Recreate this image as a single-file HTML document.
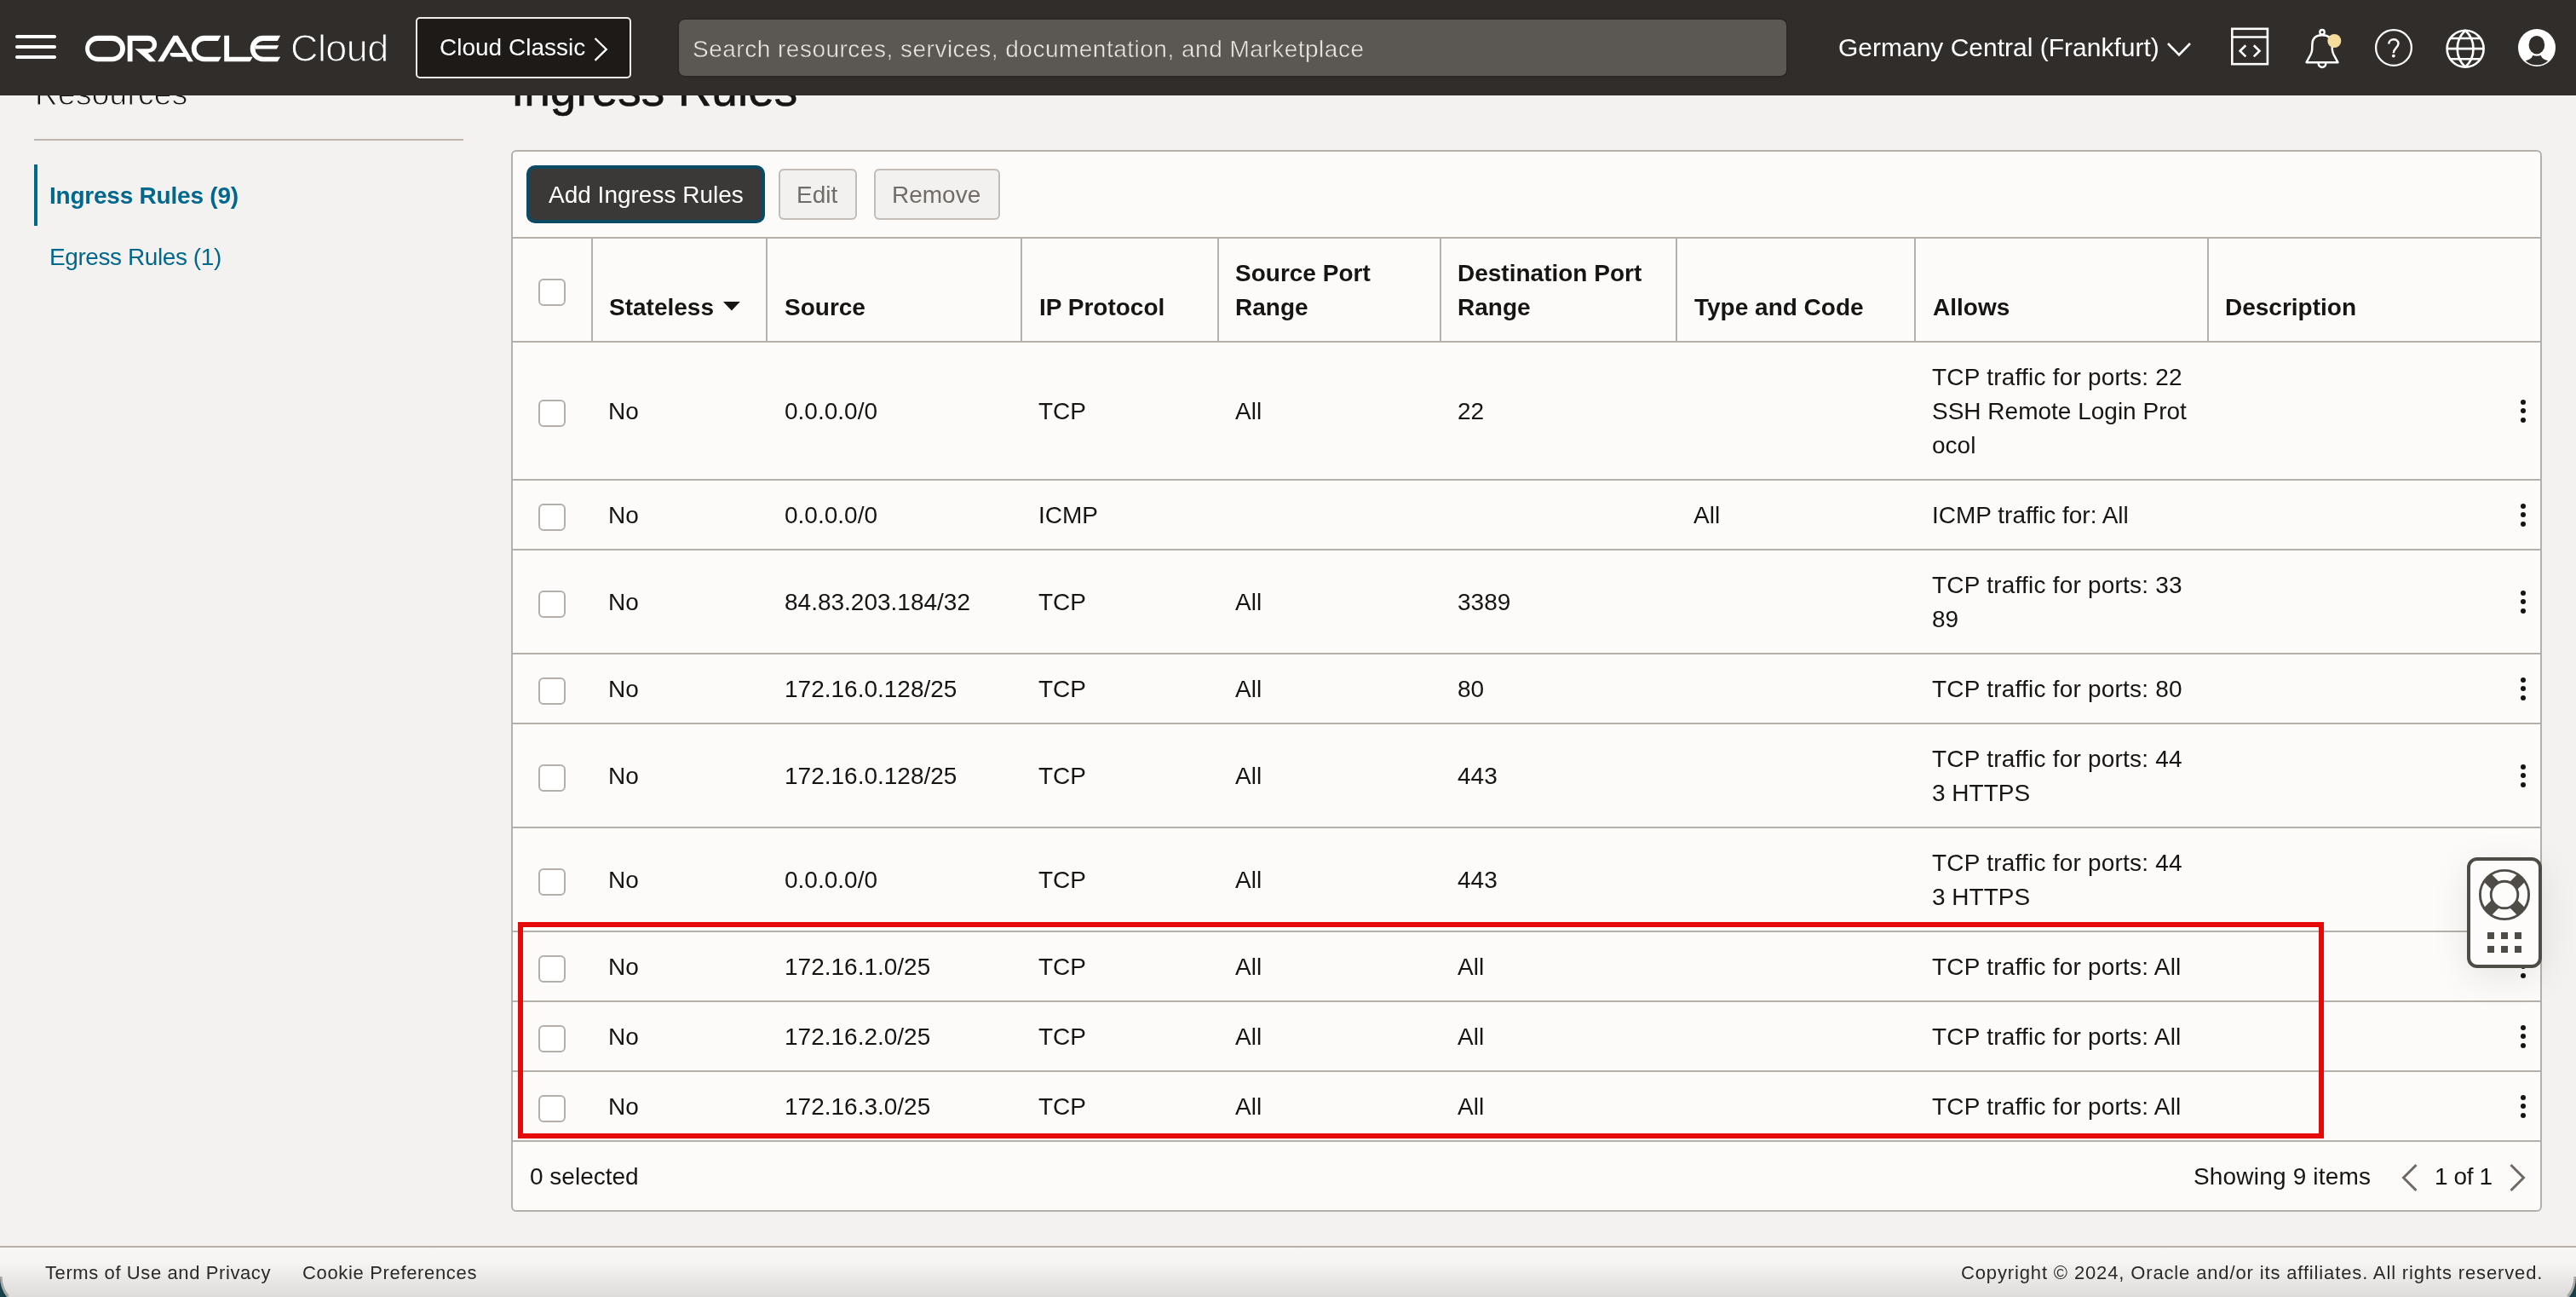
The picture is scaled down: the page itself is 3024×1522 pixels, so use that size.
<!DOCTYPE html>
<html><head><meta charset="utf-8"><title>Ingress Rules</title>
<style>
html,body{margin:0;padding:0;width:3024px;height:1522px;overflow:hidden;background:#f3f2f0;font-family:"Liberation Sans", sans-serif}
.t{position:absolute;white-space:nowrap;font-family:"Liberation Sans", sans-serif;will-change:transform}
.r{position:absolute;box-sizing:content-box}
</style></head><body>
<div class="r" style="left:0px;top:112px;width:3024px;height:1350px;background:#f3f2f0"></div>
<div class="t" style="left:41px;top:91.68px;font-size:37px;line-height:37px;color:#161513;font-weight:normal;letter-spacing:0.3px;-webkit-text-stroke:0.9px #f3f2f0;">Resources</div>
<div class="t" style="left:600px;top:78.44px;font-size:55px;line-height:55px;color:#161513;font-weight:normal;letter-spacing:0px;-webkit-text-stroke:0.6px #161513;">Ingress Rules</div>
<div class="r" style="left:40px;top:163px;width:504px;height:2px;background:#bdb6b0"></div>
<div class="r" style="left:40px;top:193px;width:4px;height:72px;background:#00688c"></div>
<div class="t" style="left:58px;top:216.30px;font-size:28px;line-height:28px;color:#00688c;font-weight:bold;letter-spacing:-0.22px;">Ingress Rules (9)</div>
<div class="t" style="left:58px;top:288.30px;font-size:28px;line-height:28px;color:#00688c;font-weight:normal;letter-spacing:-0.42px;">Egress Rules (1)</div>
<div class="r" style="left:600px;top:176px;width:2380px;height:1242px;border:2px solid #b6b0ab;border-radius:6px;background:#fcfbfa"></div>
<div class="r" style="left:618px;top:194px;width:272px;height:60px;border:4px solid #0b4a63;border-radius:10px;background:#3b3937"></div>
<div class="t" style="left:644px;top:215.30px;font-size:28px;line-height:28px;color:#ffffff;font-weight:normal;letter-spacing:0px;">Add Ingress Rules</div>
<div class="r" style="left:914px;top:198px;width:88px;height:56px;border:2px solid #c3bcb6;border-radius:6px;background:#f3f1ef"></div>
<div class="t" style="left:935px;top:215.30px;font-size:28px;line-height:28px;color:#716c67;font-weight:normal;letter-spacing:0px;">Edit</div>
<div class="r" style="left:1026px;top:198px;width:144px;height:56px;border:2px solid #c3bcb6;border-radius:6px;background:#f3f1ef"></div>
<div class="t" style="left:1047px;top:215.30px;font-size:28px;line-height:28px;color:#716c67;font-weight:normal;letter-spacing:0px;">Remove</div>
<div class="r" style="left:602px;top:278px;width:2380px;height:2px;background:#b6b0ab"></div>
<div class="r" style="left:602px;top:400px;width:2380px;height:2px;background:#b6b0ab"></div>
<div class="r" style="left:694px;top:280px;width:2px;height:120px;background:#b6b0ab"></div>
<div class="r" style="left:899px;top:280px;width:2px;height:120px;background:#b6b0ab"></div>
<div class="r" style="left:1198px;top:280px;width:2px;height:120px;background:#b6b0ab"></div>
<div class="r" style="left:1429px;top:280px;width:2px;height:120px;background:#b6b0ab"></div>
<div class="r" style="left:1690px;top:280px;width:2px;height:120px;background:#b6b0ab"></div>
<div class="r" style="left:1967px;top:280px;width:2px;height:120px;background:#b6b0ab"></div>
<div class="r" style="left:2247px;top:280px;width:2px;height:120px;background:#b6b0ab"></div>
<div class="r" style="left:2591px;top:280px;width:2px;height:120px;background:#b6b0ab"></div>
<div class="r" style="left:632px;top:327px;width:28px;height:28px;border:2px solid #b5afaa;border-radius:6px;background:#fff"></div>
<div class="t" style="left:715px;top:347.30px;font-size:28px;line-height:28px;color:#161513;font-weight:bold;letter-spacing:0px;">Stateless</div>
<svg class="r" style="left:849px;top:354px" width="21" height="11"><path d="M0,0 H19.8 L9.9,10.4 Z" fill="#161513"/></svg>
<div class="t" style="left:921px;top:347.30px;font-size:28px;line-height:28px;color:#161513;font-weight:bold;letter-spacing:0px;">Source</div>
<div class="t" style="left:1220px;top:347.30px;font-size:28px;line-height:28px;color:#161513;font-weight:bold;letter-spacing:0px;">IP Protocol</div>
<div class="t" style="left:1450px;top:307.30px;font-size:28px;line-height:28px;color:#161513;font-weight:bold;letter-spacing:0px;">Source Port</div>
<div class="t" style="left:1450px;top:347.30px;font-size:28px;line-height:28px;color:#161513;font-weight:bold;letter-spacing:0px;">Range</div>
<div class="t" style="left:1711px;top:307.30px;font-size:28px;line-height:28px;color:#161513;font-weight:bold;letter-spacing:0px;">Destination Port</div>
<div class="t" style="left:1711px;top:347.30px;font-size:28px;line-height:28px;color:#161513;font-weight:bold;letter-spacing:0px;">Range</div>
<div class="t" style="left:1989px;top:347.30px;font-size:28px;line-height:28px;color:#161513;font-weight:bold;letter-spacing:0px;">Type and Code</div>
<div class="t" style="left:2269px;top:347.30px;font-size:28px;line-height:28px;color:#161513;font-weight:bold;letter-spacing:0px;">Allows</div>
<div class="t" style="left:2612px;top:347.30px;font-size:28px;line-height:28px;color:#161513;font-weight:bold;letter-spacing:0px;">Description</div>
<div class="r" style="left:632px;top:469px;width:28px;height:28px;border:2px solid #b5afaa;border-radius:6px;background:#fff"></div>
<div class="t" style="left:714px;top:469.30px;font-size:28px;line-height:28px;color:#161513;font-weight:normal;letter-spacing:0px;">No</div>
<div class="t" style="left:921px;top:469.30px;font-size:28px;line-height:28px;color:#161513;font-weight:normal;letter-spacing:0px;">0.0.0.0/0</div>
<div class="t" style="left:1219px;top:469.30px;font-size:28px;line-height:28px;color:#161513;font-weight:normal;letter-spacing:0px;">TCP</div>
<div class="t" style="left:1450px;top:469.30px;font-size:28px;line-height:28px;color:#161513;font-weight:normal;letter-spacing:0px;">All</div>
<div class="t" style="left:1711px;top:469.30px;font-size:28px;line-height:28px;color:#161513;font-weight:normal;letter-spacing:0px;">22</div>
<div class="t" style="left:2268px;top:429.30px;font-size:28px;line-height:28px;color:#161513;font-weight:normal;letter-spacing:0.22px;">TCP traffic for ports: 22</div>
<div class="t" style="left:2268px;top:469.30px;font-size:28px;line-height:28px;color:#161513;font-weight:normal;letter-spacing:0px;">SSH Remote Login Prot</div>
<div class="t" style="left:2268px;top:509.30px;font-size:28px;line-height:28px;color:#161513;font-weight:normal;letter-spacing:0px;">ocol</div>
<div class="r" style="left:2959px;top:468.5px;width:6px;height:6px;border-radius:50%;background:#161513"></div>
<div class="r" style="left:2959px;top:479.0px;width:6px;height:6px;border-radius:50%;background:#161513"></div>
<div class="r" style="left:2959px;top:489.5px;width:6px;height:6px;border-radius:50%;background:#161513"></div>
<div class="r" style="left:602px;top:562px;width:2380px;height:2px;background:#b6b0ab"></div>
<div class="r" style="left:632px;top:591px;width:28px;height:28px;border:2px solid #b5afaa;border-radius:6px;background:#fff"></div>
<div class="t" style="left:714px;top:591.30px;font-size:28px;line-height:28px;color:#161513;font-weight:normal;letter-spacing:0px;">No</div>
<div class="t" style="left:921px;top:591.30px;font-size:28px;line-height:28px;color:#161513;font-weight:normal;letter-spacing:0px;">0.0.0.0/0</div>
<div class="t" style="left:1219px;top:591.30px;font-size:28px;line-height:28px;color:#161513;font-weight:normal;letter-spacing:0px;">ICMP</div>
<div class="t" style="left:1988px;top:591.30px;font-size:28px;line-height:28px;color:#161513;font-weight:normal;letter-spacing:0px;">All</div>
<div class="t" style="left:2268px;top:591.30px;font-size:28px;line-height:28px;color:#161513;font-weight:normal;letter-spacing:0px;">ICMP traffic for: All</div>
<div class="r" style="left:2959px;top:590.5px;width:6px;height:6px;border-radius:50%;background:#161513"></div>
<div class="r" style="left:2959px;top:601.0px;width:6px;height:6px;border-radius:50%;background:#161513"></div>
<div class="r" style="left:2959px;top:611.5px;width:6px;height:6px;border-radius:50%;background:#161513"></div>
<div class="r" style="left:602px;top:644px;width:2380px;height:2px;background:#b6b0ab"></div>
<div class="r" style="left:632px;top:693px;width:28px;height:28px;border:2px solid #b5afaa;border-radius:6px;background:#fff"></div>
<div class="t" style="left:714px;top:693.30px;font-size:28px;line-height:28px;color:#161513;font-weight:normal;letter-spacing:0px;">No</div>
<div class="t" style="left:921px;top:693.30px;font-size:28px;line-height:28px;color:#161513;font-weight:normal;letter-spacing:0px;">84.83.203.184/32</div>
<div class="t" style="left:1219px;top:693.30px;font-size:28px;line-height:28px;color:#161513;font-weight:normal;letter-spacing:0px;">TCP</div>
<div class="t" style="left:1450px;top:693.30px;font-size:28px;line-height:28px;color:#161513;font-weight:normal;letter-spacing:0px;">All</div>
<div class="t" style="left:1711px;top:693.30px;font-size:28px;line-height:28px;color:#161513;font-weight:normal;letter-spacing:0px;">3389</div>
<div class="t" style="left:2268px;top:673.30px;font-size:28px;line-height:28px;color:#161513;font-weight:normal;letter-spacing:0.22px;">TCP traffic for ports: 33</div>
<div class="t" style="left:2268px;top:713.30px;font-size:28px;line-height:28px;color:#161513;font-weight:normal;letter-spacing:0px;">89</div>
<div class="r" style="left:2959px;top:692.5px;width:6px;height:6px;border-radius:50%;background:#161513"></div>
<div class="r" style="left:2959px;top:703.0px;width:6px;height:6px;border-radius:50%;background:#161513"></div>
<div class="r" style="left:2959px;top:713.5px;width:6px;height:6px;border-radius:50%;background:#161513"></div>
<div class="r" style="left:602px;top:766px;width:2380px;height:2px;background:#b6b0ab"></div>
<div class="r" style="left:632px;top:795px;width:28px;height:28px;border:2px solid #b5afaa;border-radius:6px;background:#fff"></div>
<div class="t" style="left:714px;top:795.30px;font-size:28px;line-height:28px;color:#161513;font-weight:normal;letter-spacing:0px;">No</div>
<div class="t" style="left:921px;top:795.30px;font-size:28px;line-height:28px;color:#161513;font-weight:normal;letter-spacing:0px;">172.16.0.128/25</div>
<div class="t" style="left:1219px;top:795.30px;font-size:28px;line-height:28px;color:#161513;font-weight:normal;letter-spacing:0px;">TCP</div>
<div class="t" style="left:1450px;top:795.30px;font-size:28px;line-height:28px;color:#161513;font-weight:normal;letter-spacing:0px;">All</div>
<div class="t" style="left:1711px;top:795.30px;font-size:28px;line-height:28px;color:#161513;font-weight:normal;letter-spacing:0px;">80</div>
<div class="t" style="left:2268px;top:795.30px;font-size:28px;line-height:28px;color:#161513;font-weight:normal;letter-spacing:0.22px;">TCP traffic for ports: 80</div>
<div class="r" style="left:2959px;top:794.5px;width:6px;height:6px;border-radius:50%;background:#161513"></div>
<div class="r" style="left:2959px;top:805.0px;width:6px;height:6px;border-radius:50%;background:#161513"></div>
<div class="r" style="left:2959px;top:815.5px;width:6px;height:6px;border-radius:50%;background:#161513"></div>
<div class="r" style="left:602px;top:848px;width:2380px;height:2px;background:#b6b0ab"></div>
<div class="r" style="left:632px;top:897px;width:28px;height:28px;border:2px solid #b5afaa;border-radius:6px;background:#fff"></div>
<div class="t" style="left:714px;top:897.30px;font-size:28px;line-height:28px;color:#161513;font-weight:normal;letter-spacing:0px;">No</div>
<div class="t" style="left:921px;top:897.30px;font-size:28px;line-height:28px;color:#161513;font-weight:normal;letter-spacing:0px;">172.16.0.128/25</div>
<div class="t" style="left:1219px;top:897.30px;font-size:28px;line-height:28px;color:#161513;font-weight:normal;letter-spacing:0px;">TCP</div>
<div class="t" style="left:1450px;top:897.30px;font-size:28px;line-height:28px;color:#161513;font-weight:normal;letter-spacing:0px;">All</div>
<div class="t" style="left:1711px;top:897.30px;font-size:28px;line-height:28px;color:#161513;font-weight:normal;letter-spacing:0px;">443</div>
<div class="t" style="left:2268px;top:877.30px;font-size:28px;line-height:28px;color:#161513;font-weight:normal;letter-spacing:0.22px;">TCP traffic for ports: 44</div>
<div class="t" style="left:2268px;top:917.30px;font-size:28px;line-height:28px;color:#161513;font-weight:normal;letter-spacing:0px;">3 HTTPS</div>
<div class="r" style="left:2959px;top:896.5px;width:6px;height:6px;border-radius:50%;background:#161513"></div>
<div class="r" style="left:2959px;top:907.0px;width:6px;height:6px;border-radius:50%;background:#161513"></div>
<div class="r" style="left:2959px;top:917.5px;width:6px;height:6px;border-radius:50%;background:#161513"></div>
<div class="r" style="left:602px;top:970px;width:2380px;height:2px;background:#b6b0ab"></div>
<div class="r" style="left:632px;top:1019px;width:28px;height:28px;border:2px solid #b5afaa;border-radius:6px;background:#fff"></div>
<div class="t" style="left:714px;top:1019.30px;font-size:28px;line-height:28px;color:#161513;font-weight:normal;letter-spacing:0px;">No</div>
<div class="t" style="left:921px;top:1019.30px;font-size:28px;line-height:28px;color:#161513;font-weight:normal;letter-spacing:0px;">0.0.0.0/0</div>
<div class="t" style="left:1219px;top:1019.30px;font-size:28px;line-height:28px;color:#161513;font-weight:normal;letter-spacing:0px;">TCP</div>
<div class="t" style="left:1450px;top:1019.30px;font-size:28px;line-height:28px;color:#161513;font-weight:normal;letter-spacing:0px;">All</div>
<div class="t" style="left:1711px;top:1019.30px;font-size:28px;line-height:28px;color:#161513;font-weight:normal;letter-spacing:0px;">443</div>
<div class="t" style="left:2268px;top:999.30px;font-size:28px;line-height:28px;color:#161513;font-weight:normal;letter-spacing:0.22px;">TCP traffic for ports: 44</div>
<div class="t" style="left:2268px;top:1039.30px;font-size:28px;line-height:28px;color:#161513;font-weight:normal;letter-spacing:0px;">3 HTTPS</div>
<div class="r" style="left:2959px;top:1018.5px;width:6px;height:6px;border-radius:50%;background:#161513"></div>
<div class="r" style="left:2959px;top:1029.0px;width:6px;height:6px;border-radius:50%;background:#161513"></div>
<div class="r" style="left:2959px;top:1039.5px;width:6px;height:6px;border-radius:50%;background:#161513"></div>
<div class="r" style="left:602px;top:1092px;width:2380px;height:2px;background:#b6b0ab"></div>
<div class="r" style="left:632px;top:1121px;width:28px;height:28px;border:2px solid #b5afaa;border-radius:6px;background:#fff"></div>
<div class="t" style="left:714px;top:1121.30px;font-size:28px;line-height:28px;color:#161513;font-weight:normal;letter-spacing:0px;">No</div>
<div class="t" style="left:921px;top:1121.30px;font-size:28px;line-height:28px;color:#161513;font-weight:normal;letter-spacing:0px;">172.16.1.0/25</div>
<div class="t" style="left:1219px;top:1121.30px;font-size:28px;line-height:28px;color:#161513;font-weight:normal;letter-spacing:0px;">TCP</div>
<div class="t" style="left:1450px;top:1121.30px;font-size:28px;line-height:28px;color:#161513;font-weight:normal;letter-spacing:0px;">All</div>
<div class="t" style="left:1711px;top:1121.30px;font-size:28px;line-height:28px;color:#161513;font-weight:normal;letter-spacing:0px;">All</div>
<div class="t" style="left:2268px;top:1121.30px;font-size:28px;line-height:28px;color:#161513;font-weight:normal;letter-spacing:0.22px;">TCP traffic for ports: All</div>
<div class="r" style="left:2959px;top:1120.5px;width:6px;height:6px;border-radius:50%;background:#161513"></div>
<div class="r" style="left:2959px;top:1131.0px;width:6px;height:6px;border-radius:50%;background:#161513"></div>
<div class="r" style="left:2959px;top:1141.5px;width:6px;height:6px;border-radius:50%;background:#161513"></div>
<div class="r" style="left:602px;top:1174px;width:2380px;height:2px;background:#b6b0ab"></div>
<div class="r" style="left:632px;top:1203px;width:28px;height:28px;border:2px solid #b5afaa;border-radius:6px;background:#fff"></div>
<div class="t" style="left:714px;top:1203.30px;font-size:28px;line-height:28px;color:#161513;font-weight:normal;letter-spacing:0px;">No</div>
<div class="t" style="left:921px;top:1203.30px;font-size:28px;line-height:28px;color:#161513;font-weight:normal;letter-spacing:0px;">172.16.2.0/25</div>
<div class="t" style="left:1219px;top:1203.30px;font-size:28px;line-height:28px;color:#161513;font-weight:normal;letter-spacing:0px;">TCP</div>
<div class="t" style="left:1450px;top:1203.30px;font-size:28px;line-height:28px;color:#161513;font-weight:normal;letter-spacing:0px;">All</div>
<div class="t" style="left:1711px;top:1203.30px;font-size:28px;line-height:28px;color:#161513;font-weight:normal;letter-spacing:0px;">All</div>
<div class="t" style="left:2268px;top:1203.30px;font-size:28px;line-height:28px;color:#161513;font-weight:normal;letter-spacing:0.22px;">TCP traffic for ports: All</div>
<div class="r" style="left:2959px;top:1202.5px;width:6px;height:6px;border-radius:50%;background:#161513"></div>
<div class="r" style="left:2959px;top:1213.0px;width:6px;height:6px;border-radius:50%;background:#161513"></div>
<div class="r" style="left:2959px;top:1223.5px;width:6px;height:6px;border-radius:50%;background:#161513"></div>
<div class="r" style="left:602px;top:1256px;width:2380px;height:2px;background:#b6b0ab"></div>
<div class="r" style="left:632px;top:1285px;width:28px;height:28px;border:2px solid #b5afaa;border-radius:6px;background:#fff"></div>
<div class="t" style="left:714px;top:1285.30px;font-size:28px;line-height:28px;color:#161513;font-weight:normal;letter-spacing:0px;">No</div>
<div class="t" style="left:921px;top:1285.30px;font-size:28px;line-height:28px;color:#161513;font-weight:normal;letter-spacing:0px;">172.16.3.0/25</div>
<div class="t" style="left:1219px;top:1285.30px;font-size:28px;line-height:28px;color:#161513;font-weight:normal;letter-spacing:0px;">TCP</div>
<div class="t" style="left:1450px;top:1285.30px;font-size:28px;line-height:28px;color:#161513;font-weight:normal;letter-spacing:0px;">All</div>
<div class="t" style="left:1711px;top:1285.30px;font-size:28px;line-height:28px;color:#161513;font-weight:normal;letter-spacing:0px;">All</div>
<div class="t" style="left:2268px;top:1285.30px;font-size:28px;line-height:28px;color:#161513;font-weight:normal;letter-spacing:0.22px;">TCP traffic for ports: All</div>
<div class="r" style="left:2959px;top:1284.5px;width:6px;height:6px;border-radius:50%;background:#161513"></div>
<div class="r" style="left:2959px;top:1295.0px;width:6px;height:6px;border-radius:50%;background:#161513"></div>
<div class="r" style="left:2959px;top:1305.5px;width:6px;height:6px;border-radius:50%;background:#161513"></div>
<div class="r" style="left:602px;top:1338px;width:2380px;height:2px;background:#b6b0ab"></div>
<div class="t" style="left:622px;top:1367.30px;font-size:28px;line-height:28px;color:#161513;font-weight:normal;letter-spacing:0px;">0 selected</div>
<div class="t" style="left:2575px;top:1367.30px;font-size:28px;line-height:28px;color:#161513;font-weight:normal;letter-spacing:0.18px;">Showing 9 items</div>
<svg class="r" style="left:2814px;top:1362px" width="30" height="40"><path d="M22.5,5 L7.5,20 L22.5,35" fill="none" stroke="#6f6863" stroke-width="3"/></svg>
<div class="t" style="left:2858px;top:1367.30px;font-size:28px;line-height:28px;color:#161513;font-weight:normal;letter-spacing:-0.4px;">1 of 1</div>
<svg class="r" style="left:2940px;top:1362px" width="30" height="40"><path d="M7.5,5 L22.5,20 L7.5,35" fill="none" stroke="#6f6863" stroke-width="3"/></svg>
<div class="r" style="left:608px;top:1082px;width:2108px;height:242px;border:6px solid #e50a0a"></div>
<div class="r" style="left:2896px;top:1006px;width:80px;height:122px;border:4px solid #4f4c48;border-radius:12px;background:#fdfcfb;box-shadow:0 10px 44px rgba(0,0,0,0.09)">
<svg style="position:absolute;left:0;top:0" width="80" height="122">
<g transform="translate(40,40)" fill="none" stroke="#4f4c48">
<circle r="28.6" stroke-width="2.9"/>
<circle r="15.8" stroke-width="2.9"/>
<g stroke-width="12.5">
<line x1="11" y1="-11" x2="20" y2="-20"/><line x1="-11" y1="-11" x2="-20" y2="-20"/>
<line x1="11" y1="11" x2="20" y2="20"/><line x1="-11" y1="11" x2="-20" y2="20"/>
</g></g>
<g fill="#4f4c48">
<rect x="20" y="84" width="8" height="8"/><rect x="36" y="84" width="8" height="8"/><rect x="52" y="84" width="8" height="8"/>
<rect x="20" y="100" width="8" height="8"/><rect x="36" y="100" width="8" height="8"/><rect x="52" y="100" width="8" height="8"/>
</g></svg></div>
<div class="r" style="left:0px;top:1462px;width:3024px;height:2px;background:#b5aea9"></div>
<div class="r" style="left:0px;top:1464px;width:3024px;height:58px;background:linear-gradient(#f8f7f5 0%, #f5f4f2 30%, #dedcda 100%)"></div>
<div class="t" style="left:53px;top:1483.38px;font-size:22px;line-height:22px;color:#2b2826;font-weight:normal;letter-spacing:0.6px;">Terms of Use and Privacy</div>
<div class="t" style="left:355px;top:1483.38px;font-size:22px;line-height:22px;color:#2b2826;font-weight:normal;letter-spacing:0.66px;">Cookie Preferences</div>
<div class="t" style="left:2302px;top:1483.38px;font-size:22px;line-height:22px;color:#2b2826;font-weight:normal;letter-spacing:0.86px;">Copyright © 2024, Oracle and/or its affiliates. All rights reserved.</div>
<svg class="r" style="left:0px;top:1482px" width="40" height="40"><path d="M0,16 A37,37 0 0 0 9,40" fill="none" stroke="#a9a8a6" stroke-width="5"/><path d="M0,17 A37,37 0 0 0 8,40 L0,40 Z" fill="#173f47"/></svg>
<svg class="r" style="left:2984px;top:1482px" width="40" height="40"><path d="M40,16 A37,37 0 0 1 31,40" fill="none" stroke="#a9a8a6" stroke-width="5"/><path d="M40,17 A37,37 0 0 1 32,40 L40,40 Z" fill="#173f47"/></svg>
<div class="r" style="left:0px;top:0px;width:3024px;height:112px;background:#312d2a"></div>
<div class="r" style="left:18px;top:41px;width:48px;height:4px;background:#fff;border-radius:2px"></div>
<div class="r" style="left:18px;top:53px;width:48px;height:4px;background:#fff;border-radius:2px"></div>
<div class="r" style="left:18px;top:65px;width:48px;height:4px;background:#fff;border-radius:2px"></div>
<svg class="r" style="left:90px;top:30px" width="250" height="55" viewBox="0 0 2576 567">
<g fill="#fff">
<path fill-rule="evenodd" d="M260,122 L430,122 A156.5,156.5 0 0 1 430,435 L260,435 A156.5,156.5 0 0 1 260,122 Z M250,185 L430,185 A96.5,96.5 0 0 1 430,378 L250,378 A96.5,96.5 0 0 1 250,185 Z"/>
<path d="M615,122 L866,122 A104,104 0 0 1 866,330 L862,330 L960,435 L880,435 L705,282 L866,282 A48.5,48.5 0 0 0 866,185 L675,185 L675,435 L615,435 Z"/>
<path d="M980,435 L1170,122 L1225,122 L1410,435 L1350,435 L1318,378 L1170,378 Q1130,378 1130,340 L1130,330 L1290,330 L1197,192 L1050,435 Z"/>
<path d="M1545,122 L1745,122 L1710,185 L1545,185 A96.5,96.5 0 0 0 1545,378 L1750,378 L1715,435 L1545,435 A156.5,156.5 0 0 1 1545,122 Z"/>
<path d="M1785,122 L1845,122 L1845,378 L2130,378 L2097,435 L1785,435 Z"/>
<path d="M2256,122 L2465,122 L2430,185 L2256,185 A96.5,96.5 0 0 0 2256,378 L2465,378 L2430,435 L2256,435 A156.5,156.5 0 0 1 2256,122 Z"/>
<path d="M2160,240 L2445,240 L2420,283 L2160,283 Z"/>
</g></svg>
<div class="t" style="left:340.5px;top:34.41px;font-size:45px;line-height:45px;color:#ffffff;font-weight:normal;letter-spacing:-0.6px;-webkit-text-stroke:1.1px #312d2a;">Cloud</div>
<div class="r" style="left:488px;top:20px;width:249px;height:68px;border:2px solid #efebe6;border-radius:5px;background:#1e1a17"></div>
<div class="t" style="left:516px;top:42.30px;font-size:28px;line-height:28px;color:#ffffff;font-weight:normal;letter-spacing:0px;">Cloud Classic</div>
<svg class="r" style="left:694px;top:42px" width="22" height="32"><path d="M4.5,3 L17.8,15.9 L4.5,28.8" fill="none" stroke="#fff" stroke-width="2.3"/></svg>
<div class="r" style="left:797px;top:23px;width:1300px;height:66px;border-radius:7px;background:#5b5753;box-shadow:0 0 0 1.5px #2a2623"></div>
<div class="t" style="left:813px;top:44.30px;font-size:28px;line-height:28px;color:#ece8e2;font-weight:normal;letter-spacing:0.5px;-webkit-text-stroke:0.5px #5b5753;">Search resources, services, documentation, and Marketplace</div>
<div class="t" style="left:2157.5px;top:41.11px;font-size:30px;line-height:30px;color:#ffffff;font-weight:normal;letter-spacing:0px;">Germany Central (Frankfurt)</div>
<svg class="r" style="left:2540px;top:46px" width="36" height="24"><path d="M5,5 L18,18.5 L31,5" fill="none" stroke="#fff" stroke-width="2.6"/></svg>
<svg class="r" style="left:2600px;top:20px" width="424" height="72" viewBox="0 0 424 72">
<g fill="none" stroke="#fff" stroke-width="2.6">
<rect x="20.3" y="13.8" width="41.6" height="41.4"/>
<line x1="20.3" y1="23.5" x2="61.9" y2="23.5"/>
<path d="M36.3,33.2 L29.6,39.8 L36.3,46.4"/>
<path d="M45.8,33.2 L52.5,39.8 L45.8,46.4"/>
<path stroke-width="2.5" stroke-linejoin="round" d="M126,21.3 C119,21.3 114.6,25 114.4,32 L114.2,38 C114,41 113.5,42 112.5,44 L107.6,53.2 L144.4,53.2 L139.5,44 C138.5,42 138,41 137.8,38 L137.6,32 C137.4,25 133,21.3 126,21.3 Z M121.7,54.6 A4.3,4.3 0 0 0 130.3,54.6"/>
<circle cx="126" cy="17.7" r="2.7" stroke-width="2.3"/>
<circle cx="210" cy="36" r="20.9" stroke-width="2.3"/>
<path stroke-width="2.4" d="M204.3,31.6 C204.3,24.6 215.5,24.6 215.5,31.3 C215.5,35.6 209.8,37 209.8,42.3"/>
<circle cx="294.1" cy="37.2" r="21.5"/>
<path stroke-linejoin="round" d="M294.1,15.8 A29,29 0 0 0 294.1,58.6 A29,29 0 0 0 294.1,15.8 Z"/>
<line x1="272.6" y1="37.1" x2="315.6" y2="37.1"/>
<line x1="276.4" y1="25" x2="311.8" y2="25"/>
<line x1="276.4" y1="49.2" x2="311.8" y2="49.2"/>
</g>
<circle cx="209.8" cy="45.6" r="1.9" fill="#fff"/>
<circle cx="140.3" cy="28" r="8" fill="#f5dd9e"/>
<circle cx="378" cy="36" r="22" fill="#fff"/>
<ellipse cx="377.9" cy="32.7" rx="9.3" ry="10.8" fill="#312d2a"/>
<path d="M373.2,45 Q378,46.5 382.8,45 C384,48.8 387,50 391.2,51.2 C387,55 383,56.2 378,56.2 C373,56.2 369,55 364.8,51.2 C369,50 372,48.8 373.2,45 Z" fill="#312d2a"/>
</svg>
</body></html>
